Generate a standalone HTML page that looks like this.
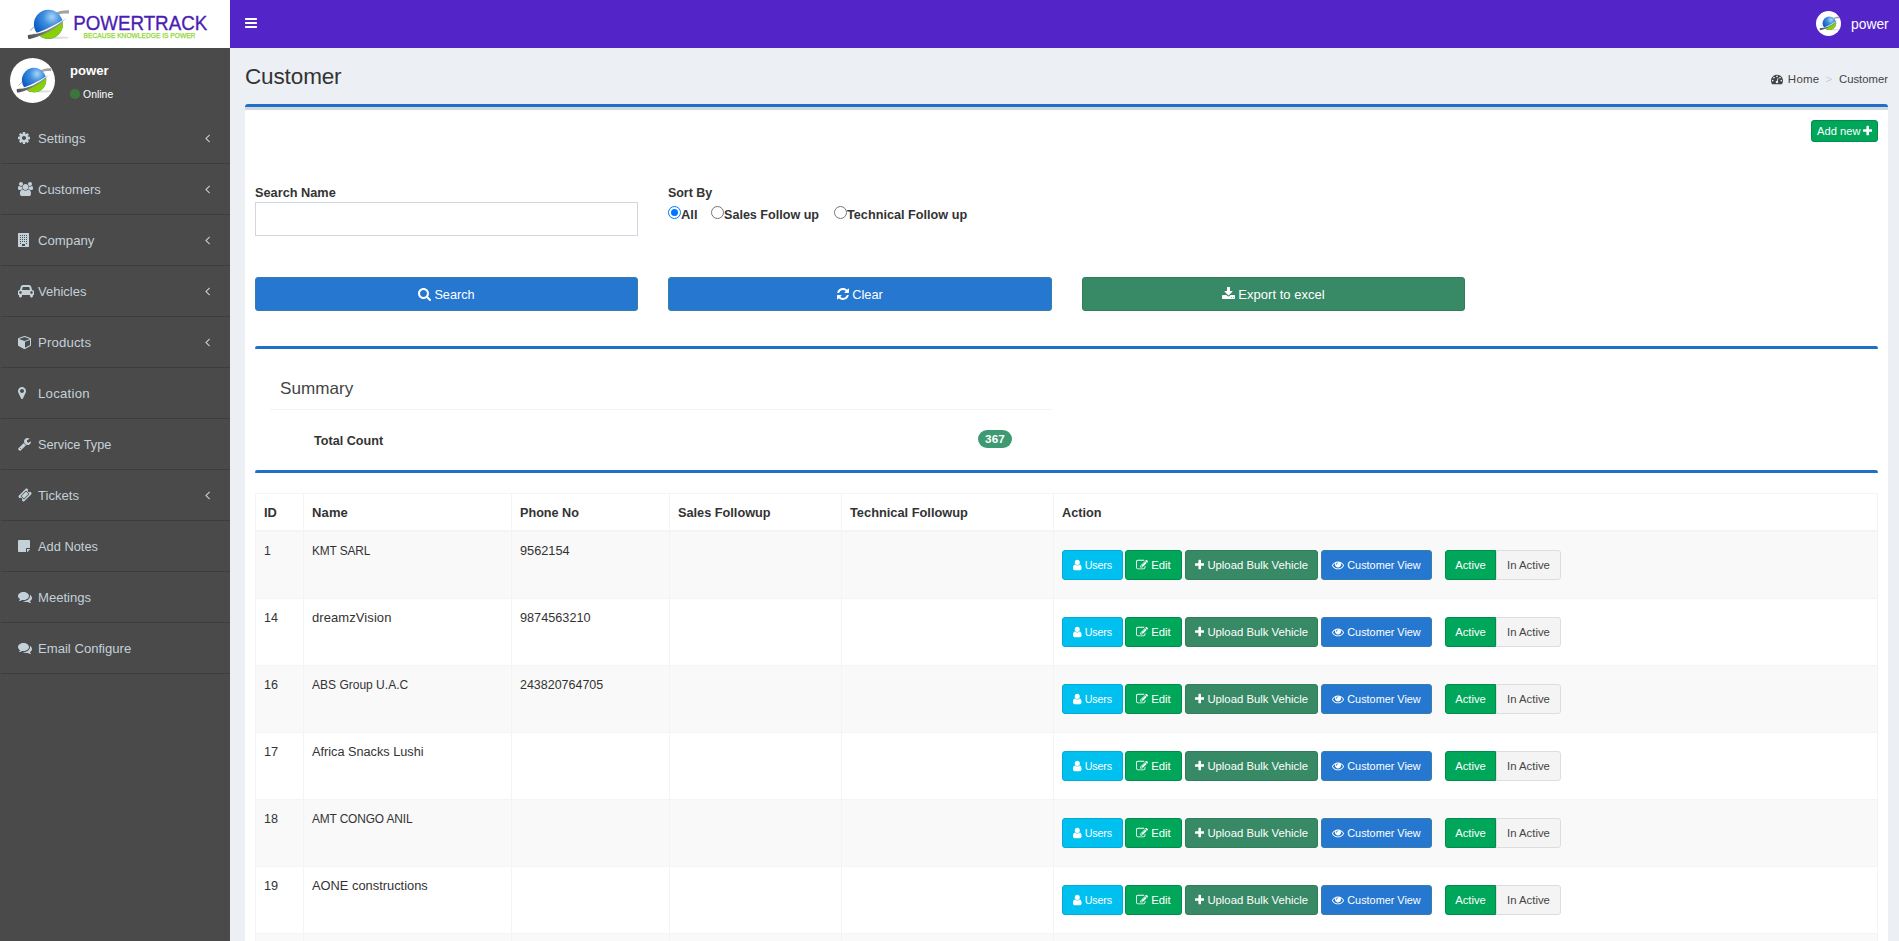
<!DOCTYPE html>
<html lang="en">
<head>
<meta charset="utf-8">
<title>Customer</title>
<style>
*{box-sizing:border-box}
html,body{margin:0;padding:0}
body{width:1899px;height:941px;overflow:hidden;background:#ecf0f5;font-family:"Liberation Sans",sans-serif;font-size:13px;line-height:20px;color:#333;position:relative}
.fa{display:inline-block;vertical-align:middle;flex:none}
span{white-space:nowrap}
/* header */
.logo{position:absolute;left:0;top:0;width:230px;height:48px;background:#fff}
.navbar{position:absolute;left:230px;top:0;width:1669px;height:48px;background:#5325c9;color:#fff}
.navbar .toggle{position:absolute;left:15px;top:16px;line-height:0}
.navbar .av{position:absolute;left:1586px;top:11px;width:25px;height:25px;border-radius:50%;background:#fff;overflow:hidden;line-height:0}
.navbar .un{position:absolute;left:1621px;top:14px;line-height:20px}
/* sidebar */
.sidebar{position:absolute;left:0;top:48px;width:230px;height:893px;background:#4a4a4a}
.upanel{position:relative;height:65px}
.upanel .img{position:absolute;left:10px;top:10px;width:45px;height:45px;border-radius:50%;background:#fff;overflow:hidden;line-height:0}
.upanel .nm{position:absolute;left:70px;top:13px;color:#fff;line-height:20px}
.upanel .st{position:absolute;left:70px;top:36px;color:#fff;line-height:20px;white-space:nowrap}
.upanel .st i{display:inline-block;width:9.6px;height:9.6px;border-radius:50%;background:#3c763d;margin-right:3.5px;vertical-align:-1px}
.menu{list-style:none;margin:0;padding:0}
.menu li{height:51px;position:relative;color:#c4d1d9;line-height:52px;padding-left:38px;white-space:nowrap}
.menu li:after{content:"";position:absolute;left:1px;right:0;bottom:0;height:1px;background:#3d3d3d}
.menu li .ic{position:absolute;left:18px;top:0;height:50px;display:flex;align-items:center}
.menu li .ar{position:absolute;left:205px;top:0px;height:50px;display:flex;align-items:center}
/* content */
h1{position:absolute;left:245px;top:63px;margin:0;line-height:26px;font-weight:normal;color:#333;font-size:23px}
.bc{position:absolute;right:11px;top:69px;line-height:20px;color:#444;white-space:nowrap;display:flex;align-items:center;font-size:11.3px}
.bc .sep{color:#ccc;margin:0 7px 0 6px}
.box{position:absolute;left:245px;top:104px;width:1643px;height:900px;background:#fff;border-top:3px solid #1f70c9;border-radius:3px 3px 0 0}
.box:before{content:"";position:absolute;left:0;top:0;width:100%;height:3px;background:#d2d6de}
.btn{position:absolute;display:flex;align-items:center;justify-content:center;color:#fff;border-radius:3px;white-space:nowrap;border:1px solid transparent}
.addnew{left:1811px;top:120px;width:67px;height:22px;background:#00a65a;border-color:#008d4c}
label{position:absolute;line-height:20px;color:#333;white-space:nowrap}
.inp{position:absolute;left:255px;top:202px;width:383px;height:34px;border:1px solid #d2d6de;background:#fff}
.radio{position:absolute;top:206px;width:13px;height:13px;border-radius:50%;border:1px solid #767676;background:#fff}
.radio.on{border-color:#0075ff;border-width:1.5px}
.radio.on:after{content:"";position:absolute;left:1.5px;top:1.5px;width:7px;height:7px;border-radius:50%;background:#0075ff}
.big{top:277px;width:383px;height:34px}
.b-primary{background:#2577d0;border-color:#367fa9}
.b-green{background:#378a65;border-color:#2f7d5a}
.hr{position:absolute;left:255px;width:1623px;height:3px;background:#1f70c9;border-radius:3px 3px 1px 1px}
.sumt{position:absolute;left:280px;top:377px;line-height:24px;color:#444}
.sumline{position:absolute;left:270px;top:409px;width:782px;height:1px;background:#f4f4f4}
.badge{position:absolute;left:978px;top:430px;width:34px;height:18px;border-radius:9px;background:#3e9a72;color:#fff;line-height:18px;text-align:center}
/* table */
table{position:absolute;left:255px;top:493px;width:1623px;border-collapse:separate;border-spacing:0;table-layout:fixed;border-top:1px solid #f4f4f4;border-left:1px solid #f4f4f4}
th,td{border-right:1px solid #f4f4f4;border-bottom:1px solid #f4f4f4;padding:9px 8px 0 8px;text-align:left;vertical-align:top;white-space:nowrap;overflow:hidden;font-weight:normal;line-height:20px}
th{height:38px;border-bottom:2px solid #f4f4f4}
td{height:67px}
tr.odd td{background:#f9f9f9}
td.act{position:relative;padding:0}
td.act .btn{top:18px;height:30px}
.u{left:8px;width:61px;background:#00c0ef;border-color:#00acd6}
.e{left:71px;width:57px;background:#00a65a;border-color:#008d4c}
.v{left:131px;width:133px;background:#378a65;border-color:#2f7d5a}
.c{left:267px;width:111px;background:#2577d0;border-color:#367fa9}
.a{left:391px;width:51px;background:#00a65a;border-color:#008d4c;border-radius:3px 0 0 3px}
.i{left:442px;width:65px;background:#f4f4f4;border-color:#ddd;color:#444;border-radius:0 3px 3px 0}

.big span{position:relative;top:1px}

</style>
</head>
<body>
<div class="logo">
<svg width="230" height="48" viewBox="0 0 230 48">
<defs>
<radialGradient id="gb" cx="0.62" cy="0.25" r="0.85"><stop offset="0" stop-color="#a8d4f5"/><stop offset="0.35" stop-color="#3f8fdf"/><stop offset="0.75" stop-color="#0f63c8"/><stop offset="1" stop-color="#0a4fb0"/></radialGradient>
<linearGradient id="gg" x1="0" y1="0" x2="1" y2="1"><stop offset="0" stop-color="#79c400"/><stop offset="1" stop-color="#93d70a"/></linearGradient>
<linearGradient id="gr" x1="0" y1="1" x2="1" y2="0"><stop offset="0" stop-color="#4d4d4d"/><stop offset="0.55" stop-color="#8a8a8a"/><stop offset="1" stop-color="#b5b5b5"/></linearGradient>
<clipPath id="cg"><circle cx="48.4" cy="24.2" r="14.5"/></clipPath>
</defs>
<ellipse cx="55" cy="37.700" rx="14" ry="1.300" fill="#000" opacity=".13"/>
<path d="M30 30.600 L34.500 26.400" stroke="#8c8c8c" stroke-width=".8" fill="none"/>
<path d="M56.300 12.600 C60 10.600 65 9.900 69 10.200 C69.300 11.500 69 12.800 68.400 13.800 C65 13.300 61 13.600 58.400 14.800Z" fill="#a3a3a3"/>
<circle cx="48.400" cy="24.200" r="14.500" fill="url(#gb)"/>
<path clip-path="url(#cg)" d="M28 38 Q54 32.500 66.300 18.200 L70 44 L28 44Z" fill="url(#gg)"/>
<path d="M27.900 35 Q34 34.500 44 30 Q56 24.600 66.500 18 Q57 27.500 46 33 Q36 38 28.700 39.200 Q27.200 37.500 27.900 35Z" fill="url(#gr)"/>
<path d="M31 34.300 Q38 33 46 29.300 Q57 24 66.500 18 Q57 25.500 47 30.600 Q38 34.500 31 34.300Z" fill="#fff"/>
<text x="73.200" y="30" font-family="Liberation Sans, sans-serif" font-size="21" fill="#4a1db3" stroke="#4a1db3" stroke-width=".35" textLength="134" lengthAdjust="spacingAndGlyphs">POWERTRACK</text>
<text x="83.600" y="38.300" font-family="Liberation Sans, sans-serif" font-size="8" fill="#8ed62c" stroke="#8ed62c" stroke-width=".25" textLength="111.800" lengthAdjust="spacingAndGlyphs">BECAUSE KNOWLEDGE IS POWER</text>
</svg>
</div>
<div class="navbar">
<div class="toggle"><svg class="fa" width="12.00" height="14" viewBox="0 -1536 1536 1792" style="" fill="currentColor"><path transform="scale(1,-1)" d="M1536 192C1536 227 1507 256 1472 256H64C29 256 0 227 0 192V64C0 29 29 0 64 0H1472C1507 0 1536 29 1536 64ZM1536 704C1536 739 1507 768 1472 768H64C29 768 0 739 0 704V576C0 541 29 512 64 512H1472C1507 512 1536 541 1536 576ZM1536 1216C1536 1251 1507 1280 1472 1280H64C29 1280 0 1251 0 1216V1088C0 1053 29 1024 64 1024H1472C1507 1024 1536 1053 1536 1088Z"/></svg></div>
<div class="av"><svg width="25" height="25" viewBox="19.8 -2 53.5 53.5"><ellipse cx="55" cy="37.700" rx="14" ry="1.300" fill="#000" opacity=".13"/>
<path d="M30 30.600 L34.500 26.400" stroke="#8c8c8c" stroke-width=".8" fill="none"/>
<path d="M56.300 12.600 C60 10.600 65 9.900 69 10.200 C69.300 11.500 69 12.800 68.400 13.800 C65 13.300 61 13.600 58.400 14.800Z" fill="#a3a3a3"/>
<circle cx="48.400" cy="24.200" r="14.500" fill="url(#gb)"/>
<path clip-path="url(#cg)" d="M28 38 Q54 32.500 66.300 18.200 L70 44 L28 44Z" fill="url(#gg)"/>
<path d="M27.900 35 Q34 34.500 44 30 Q56 24.600 66.500 18 Q57 27.500 46 33 Q36 38 28.700 39.200 Q27.200 37.500 27.900 35Z" fill="url(#gr)"/>
<path d="M31 34.300 Q38 33 46 29.300 Q57 24 66.500 18 Q57 25.500 47 30.600 Q38 34.500 31 34.300Z" fill="#fff"/></svg></div>
<div class="un"><span style="font-size:13.85px">power</span></div>
</div>
<div class="sidebar">
<div class="upanel">
<div class="img"><svg width="45" height="45" viewBox="19.8 -2 53.5 53.5"><ellipse cx="55" cy="37.700" rx="14" ry="1.300" fill="#000" opacity=".13"/>
<path d="M30 30.600 L34.500 26.400" stroke="#8c8c8c" stroke-width=".8" fill="none"/>
<path d="M56.300 12.600 C60 10.600 65 9.900 69 10.200 C69.300 11.500 69 12.800 68.400 13.800 C65 13.300 61 13.600 58.400 14.800Z" fill="#a3a3a3"/>
<circle cx="48.400" cy="24.200" r="14.500" fill="url(#gb)"/>
<path clip-path="url(#cg)" d="M28 38 Q54 32.500 66.300 18.200 L70 44 L28 44Z" fill="url(#gg)"/>
<path d="M27.900 35 Q34 34.500 44 30 Q56 24.600 66.500 18 Q57 27.500 46 33 Q36 38 28.700 39.200 Q27.200 37.500 27.900 35Z" fill="url(#gr)"/>
<path d="M31 34.300 Q38 33 46 29.300 Q57 24 66.500 18 Q57 25.500 47 30.600 Q38 34.500 31 34.300Z" fill="#fff"/></svg></div>
<div class="nm"><span style="font-size:13.11px;font-weight:bold">power</span></div>
<div class="st"><i></i><span style="font-size:10.41px">Online</span></div>
</div>
<ul class="menu">
<li><span class="ic"><svg class="fa" width="12.00" height="14" viewBox="0 -1536 1536 1792" style="" fill="currentColor"><path transform="scale(1,-1)" d="M1024 640C1024 499 909 384 768 384C627 384 512 499 512 640C512 781 627 896 768 896C909 896 1024 781 1024 640ZM1536 749C1536 766 1524 782 1507 785L1324 813C1314 846 1300 879 1283 911C1317 958 1354 1002 1388 1048C1393 1055 1396 1062 1396 1071C1396 1079 1394 1087 1389 1093C1347 1152 1277 1214 1224 1263C1217 1269 1208 1273 1199 1273C1190 1273 1181 1270 1175 1264L1033 1157C1004 1172 974 1184 943 1194L915 1378C913 1395 897 1408 879 1408H657C639 1408 625 1396 621 1380C605 1320 599 1255 592 1194C561 1184 530 1171 501 1156L363 1263C355 1269 346 1273 337 1273C303 1273 168 1127 144 1094C139 1087 135 1080 135 1071C135 1062 139 1054 145 1047C182 1002 218 957 252 909C236 879 223 849 213 817L27 789C12 786 0 768 0 753V531C0 514 12 498 29 495L212 468C222 434 236 401 253 369C219 322 182 278 148 232C143 225 140 218 140 209C140 201 142 193 147 186C189 128 259 66 312 18C319 11 328 7 337 7C346 7 355 10 362 16L503 123C532 108 562 96 593 86L621 -98C623 -115 639 -128 657 -128H879C897 -128 911 -116 915 -100C931 -40 937 25 944 86C975 96 1006 109 1035 124L1173 16C1181 11 1190 7 1199 7C1233 7 1368 154 1392 186C1398 193 1401 200 1401 209C1401 218 1397 227 1391 234C1354 279 1318 323 1284 372C1300 401 1312 431 1323 463L1508 491C1524 494 1536 512 1536 527Z"/></svg></span><span style="font-size:13.15px">Settings</span><span class="ar"><svg class="fa" width="5.00" height="14" viewBox="0 -1536 640 1792" style="" fill="currentColor"><path transform="scale(1,-1)" d="M627 992C627 1001 623 1009 617 1015L567 1065C561 1071 552 1075 544 1075C536 1075 527 1071 521 1065L55 599C49 593 45 584 45 576C45 568 49 559 55 553L521 87C527 81 536 77 544 77C552 77 561 81 567 87L617 137C623 143 627 152 627 160C627 168 623 177 617 183L224 576L617 969C623 975 627 984 627 992Z"/></svg></span></li>
<li><span class="ic"><svg class="fa" width="15.00" height="14" viewBox="0 -1536 1920 1792" style="" fill="currentColor"><path transform="scale(1,-1)" d="M593 640C541 715 512 805 512 896C512 918 514 940 517 962C474 947 430 939 384 939C249 939 145 1024 124 1024C-3 1024 0 752 0 671C0 560 94 512 194 512H328C395 592 489 637 593 640ZM1664 3C1664 229 1611 576 1318 576C1284 576 1160 437 960 437C760 437 636 576 602 576C309 576 256 229 256 3C256 -159 363 -256 523 -256H1397C1557 -256 1664 -159 1664 3ZM640 1280C640 1421 525 1536 384 1536C243 1536 128 1421 128 1280C128 1139 243 1024 384 1024C525 1024 640 1139 640 1280ZM1344 896C1344 1108 1172 1280 960 1280C748 1280 576 1108 576 896C576 684 748 512 960 512C1172 512 1344 684 1344 896ZM1920 671C1920 752 1923 1024 1796 1024C1775 1024 1671 939 1536 939C1490 939 1446 947 1403 962C1406 940 1408 918 1408 896C1408 805 1379 715 1327 640C1431 637 1525 592 1592 512H1726C1826 512 1920 560 1920 671ZM1792 1280C1792 1421 1677 1536 1536 1536C1395 1536 1280 1421 1280 1280C1280 1139 1395 1024 1536 1024C1677 1024 1792 1139 1792 1280Z"/></svg></span><span style="font-size:13.00px">Customers</span><span class="ar"><svg class="fa" width="5.00" height="14" viewBox="0 -1536 640 1792" style="" fill="currentColor"><path transform="scale(1,-1)" d="M627 992C627 1001 623 1009 617 1015L567 1065C561 1071 552 1075 544 1075C536 1075 527 1071 521 1065L55 599C49 593 45 584 45 576C45 568 49 559 55 553L521 87C527 81 536 77 544 77C552 77 561 81 567 87L617 137C623 143 627 152 627 160C627 168 623 177 617 183L224 576L617 969C623 975 627 984 627 992Z"/></svg></span></li>
<li><span class="ic"><svg class="fa" width="12.00" height="14" viewBox="0 -1536 1536 1792" style="" fill="currentColor"><path transform="scale(1,-1)" d="M1344 1536H64C29 1536 0 1507 0 1472V-192C0 -227 29 -256 64 -256H1344C1379 -256 1408 -227 1408 -192V1472C1408 1507 1379 1536 1344 1536ZM512 1248C512 1266 526 1280 544 1280H608C626 1280 640 1266 640 1248V1184C640 1166 626 1152 608 1152H544C526 1152 512 1166 512 1184ZM512 992C512 1010 526 1024 544 1024H608C626 1024 640 1010 640 992V928C640 910 626 896 608 896H544C526 896 512 910 512 928ZM512 736C512 754 526 768 544 768H608C626 768 640 754 640 736V672C640 654 626 640 608 640H544C526 640 512 654 512 672ZM512 480C512 498 526 512 544 512H608C626 512 640 498 640 480V416C640 398 626 384 608 384H544C526 384 512 398 512 416ZM384 160C384 142 370 128 352 128H288C270 128 256 142 256 160V224C256 242 270 256 288 256H352C370 256 384 242 384 224ZM384 416C384 398 370 384 352 384H288C270 384 256 398 256 416V480C256 498 270 512 288 512H352C370 512 384 498 384 480ZM384 672C384 654 370 640 352 640H288C270 640 256 654 256 672V736C256 754 270 768 288 768H352C370 768 384 754 384 736ZM384 928C384 910 370 896 352 896H288C270 896 256 910 256 928V992C256 1010 270 1024 288 1024H352C370 1024 384 1010 384 992ZM384 1184C384 1166 370 1152 352 1152H288C270 1152 256 1166 256 1184V1248C256 1266 270 1280 288 1280H352C370 1280 384 1266 384 1248ZM896 -96C896 -114 882 -128 864 -128H544C526 -128 512 -114 512 -96V96C512 114 526 128 544 128H864C882 128 896 114 896 96ZM896 416C896 398 882 384 864 384H800C782 384 768 398 768 416V480C768 498 782 512 800 512H864C882 512 896 498 896 480ZM896 672C896 654 882 640 864 640H800C782 640 768 654 768 672V736C768 754 782 768 800 768H864C882 768 896 754 896 736ZM896 928C896 910 882 896 864 896H800C782 896 768 910 768 928V992C768 1010 782 1024 800 1024H864C882 1024 896 1010 896 992ZM896 1184C896 1166 882 1152 864 1152H800C782 1152 768 1166 768 1184V1248C768 1266 782 1280 800 1280H864C882 1280 896 1266 896 1248ZM1152 160C1152 142 1138 128 1120 128H1056C1038 128 1024 142 1024 160V224C1024 242 1038 256 1056 256H1120C1138 256 1152 242 1152 224ZM1152 416C1152 398 1138 384 1120 384H1056C1038 384 1024 398 1024 416V480C1024 498 1038 512 1056 512H1120C1138 512 1152 498 1152 480ZM1152 672C1152 654 1138 640 1120 640H1056C1038 640 1024 654 1024 672V736C1024 754 1038 768 1056 768H1120C1138 768 1152 754 1152 736ZM1152 928C1152 910 1138 896 1120 896H1056C1038 896 1024 910 1024 928V992C1024 1010 1038 1024 1056 1024H1120C1138 1024 1152 1010 1152 992ZM1152 1184C1152 1166 1138 1152 1120 1152H1056C1038 1152 1024 1166 1024 1184V1248C1024 1266 1038 1280 1056 1280H1120C1138 1280 1152 1266 1152 1248Z"/></svg></span><span style="font-size:13.19px">Company</span><span class="ar"><svg class="fa" width="5.00" height="14" viewBox="0 -1536 640 1792" style="" fill="currentColor"><path transform="scale(1,-1)" d="M627 992C627 1001 623 1009 617 1015L567 1065C561 1071 552 1075 544 1075C536 1075 527 1071 521 1065L55 599C49 593 45 584 45 576C45 568 49 559 55 553L521 87C527 81 536 77 544 77C552 77 561 81 567 87L617 137C623 143 627 152 627 160C627 168 623 177 617 183L224 576L617 969C623 975 627 984 627 992Z"/></svg></span></li>
<li><span class="ic"><svg class="fa" width="16.00" height="14" viewBox="0 -1536 2048 1792" style="" fill="currentColor"><path transform="scale(1,-1)" d="M480 448C480 360 408 288 320 288C232 288 160 360 160 448C160 536 232 608 320 608C408 608 480 536 480 448ZM516 768 605 1125C608 1136 628 1152 640 1152H1408C1420 1152 1440 1136 1443 1125L1532 768ZM1888 448C1888 360 1816 288 1728 288C1640 288 1568 360 1568 448C1568 536 1640 608 1728 608C1816 608 1888 536 1888 448ZM2048 544C2048 668 1948 768 1824 768H1796L1691 1187C1660 1313 1538 1408 1408 1408H640C510 1408 388 1313 357 1187L252 768H224C100 768 0 668 0 544V160C0 142 14 128 32 128H128V0C128 -106 214 -192 320 -192C426 -192 512 -106 512 0V128H1536V0C1536 -106 1622 -192 1728 -192C1834 -192 1920 -106 1920 0V128H2016C2034 128 2048 142 2048 160Z"/></svg></span><span style="font-size:13.02px">Vehicles</span><span class="ar"><svg class="fa" width="5.00" height="14" viewBox="0 -1536 640 1792" style="" fill="currentColor"><path transform="scale(1,-1)" d="M627 992C627 1001 623 1009 617 1015L567 1065C561 1071 552 1075 544 1075C536 1075 527 1071 521 1065L55 599C49 593 45 584 45 576C45 568 49 559 55 553L521 87C527 81 536 77 544 77C552 77 561 81 567 87L617 137C623 143 627 152 627 160C627 168 623 177 617 183L224 576L617 969C623 975 627 984 627 992Z"/></svg></span></li>
<li><span class="ic"><svg class="fa" width="14.00" height="14" viewBox="0 -1536 1792 1792" style="" fill="currentColor"><path transform="scale(1,-1)" d="M896 -93V659L1536 892V256ZM832 772 134 1026 832 1280 1530 1026ZM1664 1024C1664 1078 1630 1126 1580 1144L876 1400C862 1405 847 1408 832 1408C817 1408 802 1405 788 1400L84 1144C34 1126 0 1078 0 1024V256C0 209 26 166 67 144L771 -240C790 -251 811 -256 832 -256C853 -256 874 -251 893 -240L1597 144C1638 166 1664 209 1664 256Z"/></svg></span><span style="font-size:13.20px;letter-spacing:0.14px">Products</span><span class="ar"><svg class="fa" width="5.00" height="14" viewBox="0 -1536 640 1792" style="" fill="currentColor"><path transform="scale(1,-1)" d="M627 992C627 1001 623 1009 617 1015L567 1065C561 1071 552 1075 544 1075C536 1075 527 1071 521 1065L55 599C49 593 45 584 45 576C45 568 49 559 55 553L521 87C527 81 536 77 544 77C552 77 561 81 567 87L617 137C623 143 627 152 627 160C627 168 623 177 617 183L224 576L617 969C623 975 627 984 627 992Z"/></svg></span></li>
<li><span class="ic"><svg class="fa" width="8.00" height="14" viewBox="0 -1536 1024 1792" style="" fill="currentColor"><path transform="scale(1,-1)" d="M768 896C768 755 653 640 512 640C371 640 256 755 256 896C256 1037 371 1152 512 1152C653 1152 768 1037 768 896ZM1024 896C1024 1179 795 1408 512 1408C229 1408 0 1179 0 896C0 835 7 772 33 717L398 -57C418 -101 464 -128 512 -128C560 -128 606 -101 627 -57L991 717C1017 772 1024 835 1024 896Z"/></svg></span><span style="font-size:13.20px;letter-spacing:0.24px">Location</span></li>
<li><span class="ic"><svg class="fa" width="13.00" height="14" viewBox="0 -1536 1664 1792" style="" fill="currentColor"><path transform="scale(1,-1)" d="M384 64C384 29 355 0 320 0C285 0 256 29 256 64C256 99 285 128 320 128C355 128 384 99 384 64ZM1028 484C897 536 792 641 740 772L59 91C35 67 21 34 21 0C21 -34 35 -67 59 -90L165 -198C189 -221 222 -235 256 -235C290 -235 323 -221 346 -198L1028 484ZM1662 919C1662 939 1650 954 1630 954C1610 954 1378 808 1345 789L1152 896V1120L1445 1289C1454 1295 1461 1306 1461 1317C1461 1329 1455 1338 1445 1345C1384 1386 1289 1408 1216 1408C969 1408 768 1207 768 960C768 713 969 512 1216 512C1405 512 1576 635 1639 813C1650 845 1662 886 1662 919Z"/></svg></span><span style="font-size:12.73px">Service Type</span></li>
<li><span class="ic"><svg class="fa" width="14.00" height="14" viewBox="0 -1536 1792 1792" style="" fill="currentColor"><path transform="scale(1,-1)" d="M1024 1084 452 512 768 196 1340 768ZM813 105C801 93 785 87 768 87C751 87 735 93 723 105L361 467C336 492 336 532 361 557L979 1175C1003 1199 1045 1199 1069 1175L1431 813C1456 788 1456 748 1431 723ZM1702 742C1751 791 1751 873 1702 923L1576 1048C1501 973 1379 973 1304 1048C1229 1123 1229 1245 1304 1320L1179 1445C1129 1495 1047 1495 998 1445L91 539C41 489 41 407 91 358L216 232C291 307 413 307 488 232C563 157 563 35 488 -40L614 -166C663 -215 745 -215 795 -166L1702 742Z"/></svg></span><span style="font-size:13.12px">Tickets</span><span class="ar"><svg class="fa" width="5.00" height="14" viewBox="0 -1536 640 1792" style="" fill="currentColor"><path transform="scale(1,-1)" d="M627 992C627 1001 623 1009 617 1015L567 1065C561 1071 552 1075 544 1075C536 1075 527 1071 521 1065L55 599C49 593 45 584 45 576C45 568 49 559 55 553L521 87C527 81 536 77 544 77C552 77 561 81 567 87L617 137C623 143 627 152 627 160C627 168 623 177 617 183L224 576L617 969C623 975 627 984 627 992Z"/></svg></span></li>
<li><span class="ic"><svg class="fa" width="12.00" height="14" viewBox="0 -1536 1536 1792" style="" fill="currentColor"><path transform="scale(1,-1)" d="M1024 288C1024 341 1067 384 1120 384H1536V1312C1536 1365 1493 1408 1440 1408H96C43 1408 0 1365 0 1312V-32C0 -85 43 -128 96 -128H1024ZM1152 256V-125C1200 -116 1254 -90 1284 -60L1468 124C1498 154 1524 208 1533 256Z"/></svg></span><span style="font-size:12.85px">Add Notes</span></li>
<li><span class="ic"><svg class="fa" width="14.00" height="14" viewBox="0 -1536 1792 1792" style="" fill="currentColor"><path transform="scale(1,-1)" d="M1408 768C1408 1051 1093 1280 704 1280C315 1280 0 1051 0 768C0 606 104 461 266 367C232 284 188 245 149 201C138 188 125 176 129 157C129 157 129 157 129 157C132 140 146 128 161 128C162 128 163 128 164 128C194 132 223 137 250 144C351 170 445 213 528 272C584 262 643 256 704 256C1093 256 1408 485 1408 768ZM1792 512C1792 679 1682 827 1513 920C1528 871 1536 820 1536 768C1536 589 1444 424 1277 302C1122 190 919 128 704 128C675 128 645 130 616 132C741 50 907 0 1088 0C1149 0 1208 6 1264 16C1347 -43 1441 -86 1542 -112C1569 -119 1598 -124 1628 -128C1644 -130 1659 -117 1663 -99C1663 -99 1663 -99 1663 -99C1667 -80 1654 -68 1643 -55C1604 -11 1560 28 1526 111C1688 205 1792 349 1792 512Z"/></svg></span><span style="font-size:13.07px">Meetings</span></li>
<li><span class="ic"><svg class="fa" width="14.00" height="14" viewBox="0 -1536 1792 1792" style="" fill="currentColor"><path transform="scale(1,-1)" d="M1408 768C1408 1051 1093 1280 704 1280C315 1280 0 1051 0 768C0 606 104 461 266 367C232 284 188 245 149 201C138 188 125 176 129 157C129 157 129 157 129 157C132 140 146 128 161 128C162 128 163 128 164 128C194 132 223 137 250 144C351 170 445 213 528 272C584 262 643 256 704 256C1093 256 1408 485 1408 768ZM1792 512C1792 679 1682 827 1513 920C1528 871 1536 820 1536 768C1536 589 1444 424 1277 302C1122 190 919 128 704 128C675 128 645 130 616 132C741 50 907 0 1088 0C1149 0 1208 6 1264 16C1347 -43 1441 -86 1542 -112C1569 -119 1598 -124 1628 -128C1644 -130 1659 -117 1663 -99C1663 -99 1663 -99 1663 -99C1667 -80 1654 -68 1643 -55C1604 -11 1560 28 1526 111C1688 205 1792 349 1792 512Z"/></svg></span><span style="font-size:13.12px">Email Configure</span></li>
</ul>
</div>
<h1><span style="font-size:22.50px;letter-spacing:-0.13px">Customer</span></h1>
<div class="bc"><svg class="fa" width="12.00" height="12" viewBox="0 -1536 1792 1792" style="margin-right:5px" fill="currentColor"><path transform="scale(1,-1)" d="M384 384C384 313 327 256 256 256C185 256 128 313 128 384C128 455 185 512 256 512C327 512 384 455 384 384ZM576 832C576 761 519 704 448 704C377 704 320 761 320 832C320 903 377 960 448 960C519 960 576 903 576 832ZM1004 351C1069 306 1103 224 1082 143C1055 41 950 -21 847 6C745 33 683 138 710 241C732 322 801 377 880 383L981 765C990 799 1025 820 1059 811C1093 802 1113 767 1105 733ZM1664 384C1664 313 1607 256 1536 256C1465 256 1408 313 1408 384C1408 455 1465 512 1536 512C1607 512 1664 455 1664 384ZM1024 1024C1024 953 967 896 896 896C825 896 768 953 768 1024C768 1095 825 1152 896 1152C967 1152 1024 1095 1024 1024ZM1472 832C1472 761 1415 704 1344 704C1273 704 1216 761 1216 832C1216 903 1273 960 1344 960C1415 960 1472 903 1472 832ZM1792 384C1792 878 1390 1280 896 1280C402 1280 0 878 0 384C0 212 49 45 141 -99C153 -117 173 -128 195 -128H1597C1619 -128 1639 -117 1651 -99C1743 46 1792 212 1792 384Z"/></svg><span style="font-size:11.50px;letter-spacing:0.22px">Home</span><span class="sep">&gt;</span><span style="font-size:11.31px">Customer</span></div>
<div class="box"></div>
<a class="btn addnew"><span style="font-size:11.16px">Add new</span><svg class="fa" width="9.43" height="12" viewBox="0 -1536 1408 1792" style="margin-left:2px" fill="currentColor"><path transform="scale(1,-1)" d="M1408 800C1408 853 1365 896 1312 896H896V1312C896 1365 853 1408 800 1408H608C555 1408 512 1365 512 1312V896H96C43 896 0 853 0 800V608C0 555 43 512 96 512H512V96C512 43 555 0 608 0H800C853 0 896 43 896 96V512H1312C1365 512 1408 555 1408 608Z"/></svg></a>
<label style="left:255px;top:183px"><span style="font-size:12.76px;font-weight:bold">Search Name</span></label>
<div class="inp"></div>
<label style="left:668px;top:183px"><span style="font-size:12.50px;letter-spacing:-0.06px;font-weight:bold">Sort By</span></label>
<span class="radio on" style="left:668px"></span><label style="left:681px;top:205px"><span style="font-size:12.94px;font-weight:bold">All</span></label>
<span class="radio" style="left:711px"></span><label style="left:724px;top:205px"><span style="font-size:12.59px;font-weight:bold">Sales Follow up</span></label>
<span class="radio" style="left:834px"></span><label style="left:847px;top:205px"><span style="font-size:12.68px;font-weight:bold">Technical Follow up</span></label>
<a class="btn big b-primary" style="left:255px"><svg class="fa" width="13.00" height="14" viewBox="0 -1536 1664 1792" style="margin-right:3px" fill="currentColor"><path transform="scale(1,-1)" d="M1152 704C1152 457 951 256 704 256C457 256 256 457 256 704C256 951 457 1152 704 1152C951 1152 1152 951 1152 704ZM1664 -128C1664 -94 1650 -61 1627 -38L1284 305C1365 422 1408 562 1408 704C1408 1093 1093 1408 704 1408C315 1408 0 1093 0 704C0 315 315 0 704 0C846 0 986 43 1103 124L1446 -218C1469 -242 1502 -256 1536 -256C1606 -256 1664 -198 1664 -128Z"/></svg><span style="font-size:12.69px">Search</span></a>
<a class="btn big b-primary" style="left:668px;width:384px"><svg class="fa" width="12.00" height="14" viewBox="0 -1536 1536 1792" style="margin-right:3px" fill="currentColor"><path transform="scale(1,-1)" d="M1511 480C1511 497 1497 512 1479 512H1287C1272 512 1262 503 1257 489C1240 449 1228 411 1204 372C1111 220 946 128 768 128C639 128 514 178 420 266L557 403C569 415 576 431 576 448C576 483 547 512 512 512H64C29 512 0 483 0 448V0C0 -35 29 -64 64 -64C81 -64 97 -57 109 -45L238 84C380 -51 569 -128 764 -128C1133 -128 1425 119 1510 473C1511 475 1511 478 1511 480ZM1536 1280C1536 1315 1507 1344 1472 1344C1455 1344 1439 1337 1427 1325L1297 1196C1155 1330 964 1408 768 1408C399 1408 104 1162 18 807C18 805 18 802 18 800C18 783 32 768 50 768H249C264 768 274 777 279 791C296 831 308 869 332 908C425 1060 590 1152 768 1152C897 1152 1022 1103 1117 1015L979 877C967 865 960 849 960 832C960 797 989 768 1024 768H1472C1507 768 1536 797 1536 832Z"/></svg><span style="font-size:12.81px">Clear</span></a>
<a class="btn big b-green" style="left:1082px"><svg class="fa" width="13.00" height="14" viewBox="0 -1536 1664 1792" style="margin-right:3px" fill="currentColor"><path transform="scale(1,-1)" d="M1280 192C1280 157 1251 128 1216 128C1181 128 1152 157 1152 192C1152 227 1181 256 1216 256C1251 256 1280 227 1280 192ZM1536 192C1536 157 1507 128 1472 128C1437 128 1408 157 1408 192C1408 227 1437 256 1472 256C1507 256 1536 227 1536 192ZM1664 416C1664 469 1621 512 1568 512H1104L968 376C931 340 883 320 832 320C781 320 733 340 696 376L561 512H96C43 512 0 469 0 416V96C0 43 43 0 96 0H1568C1621 0 1664 43 1664 96ZM1339 985C1329 1008 1306 1024 1280 1024H1024V1472C1024 1507 995 1536 960 1536H704C669 1536 640 1507 640 1472V1024H384C358 1024 335 1008 325 985C315 961 320 933 339 915L787 467C799 454 816 448 832 448C848 448 865 454 877 467L1325 915C1344 933 1349 961 1339 985Z"/></svg><span style="font-size:13.00px;letter-spacing:0.03px">Export to excel</span></a>
<div class="hr" style="top:346px"></div>
<div class="sumt"><span style="font-size:17.13px">Summary</span></div>
<div class="sumline"></div>
<label style="left:314px;top:431px"><span style="font-size:12.62px;font-weight:bold">Total Count</span></label>
<div class="badge"><span style="font-size:11.70px;letter-spacing:0.12px;font-weight:bold">367</span></div>
<div class="hr" style="top:470px"></div>
<table>
<colgroup><col style="width:48px"><col style="width:208px"><col style="width:158px"><col style="width:172px"><col style="width:212px"><col style="width:824px"></colgroup>
<tr><th><span style="font-size:12.89px;font-weight:bold">ID</span></th><th><span style="font-size:13.00px;letter-spacing:0.14px;font-weight:bold">Name</span></th><th><span style="font-size:12.63px;font-weight:bold">Phone No</span></th><th><span style="font-size:12.72px;font-weight:bold">Sales Followup</span></th><th><span style="font-size:12.82px;font-weight:bold">Technical Followup</span></th><th><span style="font-size:12.71px;font-weight:bold">Action</span></th></tr>
<tr class="odd"><td><span style="font-size:12.30px;letter-spacing:-0.11px">1</span></td><td><span style="font-size:11.90px;letter-spacing:-0.12px">KMT SARL</span></td><td><span style="font-size:12.75px">9562154</span></td><td></td><td></td><td class="act"><a class="btn u"><svg class="fa" width="8.57" height="12" viewBox="0 -1536 1280 1792" style="margin-right:3px" fill="currentColor"><path transform="scale(1,-1)" d="M1280 137C1280 400 1215 704 953 704C872 625 762 576 640 576C518 576 408 625 327 704C65 704 0 400 0 137C0 -9 96 -128 213 -128H1067C1184 -128 1280 -9 1280 137ZM1024 1024C1024 1236 852 1408 640 1408C428 1408 256 1236 256 1024C256 812 428 640 640 640C852 640 1024 812 1024 1024Z"/></svg><span style="font-size:10.75px;letter-spacing:-0.17px">Users</span></a><a class="btn e"><svg class="fa" width="12.00" height="12" viewBox="0 -1536 1792 1792" style="margin-right:3px" fill="currentColor"><path transform="scale(1,-1)" d="M888 352H832V448H736V504L852 620L1004 468ZM1328 1072C1337 1063 1336 1048 1327 1039L977 689C968 680 953 679 944 688C935 697 936 712 945 721L1295 1071C1304 1080 1319 1081 1328 1072ZM1408 478C1408 491 1400 502 1388 507C1376 512 1363 510 1353 500L1289 436C1283 430 1280 422 1280 414V288C1280 200 1208 128 1120 128H288C200 128 128 200 128 288V1120C128 1208 200 1280 288 1280H1120C1135 1280 1150 1278 1165 1274C1176 1270 1188 1273 1197 1282L1246 1331C1254 1339 1257 1349 1255 1360C1253 1370 1246 1379 1237 1383C1200 1400 1160 1408 1120 1408H288C129 1408 0 1279 0 1120V288C0 129 129 0 288 0H1120C1279 0 1408 129 1408 288ZM1312 1216 640 544V256H928L1600 928ZM1756 1084C1793 1121 1793 1183 1756 1220L1604 1372C1567 1409 1505 1409 1468 1372L1376 1280L1664 992L1756 1084Z"/></svg><span style="font-size:11.37px">Edit</span></a><a class="btn v"><svg class="fa" width="9.43" height="12" viewBox="0 -1536 1408 1792" style="margin-right:3px" fill="currentColor"><path transform="scale(1,-1)" d="M1408 800C1408 853 1365 896 1312 896H896V1312C896 1365 853 1408 800 1408H608C555 1408 512 1365 512 1312V896H96C43 896 0 853 0 800V608C0 555 43 512 96 512H512V96C512 43 555 0 608 0H800C853 0 896 43 896 96V512H1312C1365 512 1408 555 1408 608Z"/></svg><span style="font-size:11.32px">Upload Bulk Vehicle</span></a><a class="btn c"><svg class="fa" width="12.00" height="12" viewBox="0 -1536 1792 1792" style="margin-right:3px" fill="currentColor"><path transform="scale(1,-1)" d="M1664 576C1493 312 1217 128 896 128C575 128 299 312 128 576C223 723 353 849 509 929C469 861 448 783 448 704C448 457 649 256 896 256C1143 256 1344 457 1344 704C1344 783 1323 861 1283 929C1439 849 1569 723 1664 576ZM944 960C944 934 922 912 896 912C782 912 688 818 688 704C688 678 666 656 640 656C614 656 592 678 592 704C592 871 729 1008 896 1008C922 1008 944 986 944 960ZM1792 576C1792 601 1784 624 1772 645C1588 947 1251 1152 896 1152C541 1152 204 947 20 645C8 624 0 601 0 576C0 551 8 528 20 507C204 205 541 0 896 0C1251 0 1588 204 1772 507C1784 528 1792 551 1792 576Z"/></svg><span style="font-size:10.86px">Customer View</span></a><a class="btn a"><span style="font-size:11.24px">Active</span></a><a class="btn i"><span style="font-size:11.32px">In Active</span></a></td></tr>
<tr class="even"><td><span style="font-size:12.50px">14</span></td><td><span style="font-size:13.00px;letter-spacing:0.08px">dreamzVision</span></td><td><span style="font-size:12.69px">9874563210</span></td><td></td><td></td><td class="act"><a class="btn u"><svg class="fa" width="8.57" height="12" viewBox="0 -1536 1280 1792" style="margin-right:3px" fill="currentColor"><path transform="scale(1,-1)" d="M1280 137C1280 400 1215 704 953 704C872 625 762 576 640 576C518 576 408 625 327 704C65 704 0 400 0 137C0 -9 96 -128 213 -128H1067C1184 -128 1280 -9 1280 137ZM1024 1024C1024 1236 852 1408 640 1408C428 1408 256 1236 256 1024C256 812 428 640 640 640C852 640 1024 812 1024 1024Z"/></svg><span style="font-size:10.75px;letter-spacing:-0.17px">Users</span></a><a class="btn e"><svg class="fa" width="12.00" height="12" viewBox="0 -1536 1792 1792" style="margin-right:3px" fill="currentColor"><path transform="scale(1,-1)" d="M888 352H832V448H736V504L852 620L1004 468ZM1328 1072C1337 1063 1336 1048 1327 1039L977 689C968 680 953 679 944 688C935 697 936 712 945 721L1295 1071C1304 1080 1319 1081 1328 1072ZM1408 478C1408 491 1400 502 1388 507C1376 512 1363 510 1353 500L1289 436C1283 430 1280 422 1280 414V288C1280 200 1208 128 1120 128H288C200 128 128 200 128 288V1120C128 1208 200 1280 288 1280H1120C1135 1280 1150 1278 1165 1274C1176 1270 1188 1273 1197 1282L1246 1331C1254 1339 1257 1349 1255 1360C1253 1370 1246 1379 1237 1383C1200 1400 1160 1408 1120 1408H288C129 1408 0 1279 0 1120V288C0 129 129 0 288 0H1120C1279 0 1408 129 1408 288ZM1312 1216 640 544V256H928L1600 928ZM1756 1084C1793 1121 1793 1183 1756 1220L1604 1372C1567 1409 1505 1409 1468 1372L1376 1280L1664 992L1756 1084Z"/></svg><span style="font-size:11.37px">Edit</span></a><a class="btn v"><svg class="fa" width="9.43" height="12" viewBox="0 -1536 1408 1792" style="margin-right:3px" fill="currentColor"><path transform="scale(1,-1)" d="M1408 800C1408 853 1365 896 1312 896H896V1312C896 1365 853 1408 800 1408H608C555 1408 512 1365 512 1312V896H96C43 896 0 853 0 800V608C0 555 43 512 96 512H512V96C512 43 555 0 608 0H800C853 0 896 43 896 96V512H1312C1365 512 1408 555 1408 608Z"/></svg><span style="font-size:11.32px">Upload Bulk Vehicle</span></a><a class="btn c"><svg class="fa" width="12.00" height="12" viewBox="0 -1536 1792 1792" style="margin-right:3px" fill="currentColor"><path transform="scale(1,-1)" d="M1664 576C1493 312 1217 128 896 128C575 128 299 312 128 576C223 723 353 849 509 929C469 861 448 783 448 704C448 457 649 256 896 256C1143 256 1344 457 1344 704C1344 783 1323 861 1283 929C1439 849 1569 723 1664 576ZM944 960C944 934 922 912 896 912C782 912 688 818 688 704C688 678 666 656 640 656C614 656 592 678 592 704C592 871 729 1008 896 1008C922 1008 944 986 944 960ZM1792 576C1792 601 1784 624 1772 645C1588 947 1251 1152 896 1152C541 1152 204 947 20 645C8 624 0 601 0 576C0 551 8 528 20 507C204 205 541 0 896 0C1251 0 1588 204 1772 507C1784 528 1792 551 1792 576Z"/></svg><span style="font-size:10.86px">Customer View</span></a><a class="btn a"><span style="font-size:11.24px">Active</span></a><a class="btn i"><span style="font-size:11.32px">In Active</span></a></td></tr>
<tr class="odd"><td><span style="font-size:12.62px">16</span></td><td><span style="font-size:12.03px">ABS Group U.A.C</span></td><td><span style="font-size:12.48px">243820764705</span></td><td></td><td></td><td class="act"><a class="btn u"><svg class="fa" width="8.57" height="12" viewBox="0 -1536 1280 1792" style="margin-right:3px" fill="currentColor"><path transform="scale(1,-1)" d="M1280 137C1280 400 1215 704 953 704C872 625 762 576 640 576C518 576 408 625 327 704C65 704 0 400 0 137C0 -9 96 -128 213 -128H1067C1184 -128 1280 -9 1280 137ZM1024 1024C1024 1236 852 1408 640 1408C428 1408 256 1236 256 1024C256 812 428 640 640 640C852 640 1024 812 1024 1024Z"/></svg><span style="font-size:10.75px;letter-spacing:-0.17px">Users</span></a><a class="btn e"><svg class="fa" width="12.00" height="12" viewBox="0 -1536 1792 1792" style="margin-right:3px" fill="currentColor"><path transform="scale(1,-1)" d="M888 352H832V448H736V504L852 620L1004 468ZM1328 1072C1337 1063 1336 1048 1327 1039L977 689C968 680 953 679 944 688C935 697 936 712 945 721L1295 1071C1304 1080 1319 1081 1328 1072ZM1408 478C1408 491 1400 502 1388 507C1376 512 1363 510 1353 500L1289 436C1283 430 1280 422 1280 414V288C1280 200 1208 128 1120 128H288C200 128 128 200 128 288V1120C128 1208 200 1280 288 1280H1120C1135 1280 1150 1278 1165 1274C1176 1270 1188 1273 1197 1282L1246 1331C1254 1339 1257 1349 1255 1360C1253 1370 1246 1379 1237 1383C1200 1400 1160 1408 1120 1408H288C129 1408 0 1279 0 1120V288C0 129 129 0 288 0H1120C1279 0 1408 129 1408 288ZM1312 1216 640 544V256H928L1600 928ZM1756 1084C1793 1121 1793 1183 1756 1220L1604 1372C1567 1409 1505 1409 1468 1372L1376 1280L1664 992L1756 1084Z"/></svg><span style="font-size:11.37px">Edit</span></a><a class="btn v"><svg class="fa" width="9.43" height="12" viewBox="0 -1536 1408 1792" style="margin-right:3px" fill="currentColor"><path transform="scale(1,-1)" d="M1408 800C1408 853 1365 896 1312 896H896V1312C896 1365 853 1408 800 1408H608C555 1408 512 1365 512 1312V896H96C43 896 0 853 0 800V608C0 555 43 512 96 512H512V96C512 43 555 0 608 0H800C853 0 896 43 896 96V512H1312C1365 512 1408 555 1408 608Z"/></svg><span style="font-size:11.32px">Upload Bulk Vehicle</span></a><a class="btn c"><svg class="fa" width="12.00" height="12" viewBox="0 -1536 1792 1792" style="margin-right:3px" fill="currentColor"><path transform="scale(1,-1)" d="M1664 576C1493 312 1217 128 896 128C575 128 299 312 128 576C223 723 353 849 509 929C469 861 448 783 448 704C448 457 649 256 896 256C1143 256 1344 457 1344 704C1344 783 1323 861 1283 929C1439 849 1569 723 1664 576ZM944 960C944 934 922 912 896 912C782 912 688 818 688 704C688 678 666 656 640 656C614 656 592 678 592 704C592 871 729 1008 896 1008C922 1008 944 986 944 960ZM1792 576C1792 601 1784 624 1772 645C1588 947 1251 1152 896 1152C541 1152 204 947 20 645C8 624 0 601 0 576C0 551 8 528 20 507C204 205 541 0 896 0C1251 0 1588 204 1772 507C1784 528 1792 551 1792 576Z"/></svg><span style="font-size:10.86px">Customer View</span></a><a class="btn a"><span style="font-size:11.24px">Active</span></a><a class="btn i"><span style="font-size:11.32px">In Active</span></a></td></tr>
<tr class="even"><td><span style="font-size:12.75px">17</span></td><td><span style="font-size:12.71px">Africa Snacks Lushi</span></td><td></td><td></td><td></td><td class="act"><a class="btn u"><svg class="fa" width="8.57" height="12" viewBox="0 -1536 1280 1792" style="margin-right:3px" fill="currentColor"><path transform="scale(1,-1)" d="M1280 137C1280 400 1215 704 953 704C872 625 762 576 640 576C518 576 408 625 327 704C65 704 0 400 0 137C0 -9 96 -128 213 -128H1067C1184 -128 1280 -9 1280 137ZM1024 1024C1024 1236 852 1408 640 1408C428 1408 256 1236 256 1024C256 812 428 640 640 640C852 640 1024 812 1024 1024Z"/></svg><span style="font-size:10.75px;letter-spacing:-0.17px">Users</span></a><a class="btn e"><svg class="fa" width="12.00" height="12" viewBox="0 -1536 1792 1792" style="margin-right:3px" fill="currentColor"><path transform="scale(1,-1)" d="M888 352H832V448H736V504L852 620L1004 468ZM1328 1072C1337 1063 1336 1048 1327 1039L977 689C968 680 953 679 944 688C935 697 936 712 945 721L1295 1071C1304 1080 1319 1081 1328 1072ZM1408 478C1408 491 1400 502 1388 507C1376 512 1363 510 1353 500L1289 436C1283 430 1280 422 1280 414V288C1280 200 1208 128 1120 128H288C200 128 128 200 128 288V1120C128 1208 200 1280 288 1280H1120C1135 1280 1150 1278 1165 1274C1176 1270 1188 1273 1197 1282L1246 1331C1254 1339 1257 1349 1255 1360C1253 1370 1246 1379 1237 1383C1200 1400 1160 1408 1120 1408H288C129 1408 0 1279 0 1120V288C0 129 129 0 288 0H1120C1279 0 1408 129 1408 288ZM1312 1216 640 544V256H928L1600 928ZM1756 1084C1793 1121 1793 1183 1756 1220L1604 1372C1567 1409 1505 1409 1468 1372L1376 1280L1664 992L1756 1084Z"/></svg><span style="font-size:11.37px">Edit</span></a><a class="btn v"><svg class="fa" width="9.43" height="12" viewBox="0 -1536 1408 1792" style="margin-right:3px" fill="currentColor"><path transform="scale(1,-1)" d="M1408 800C1408 853 1365 896 1312 896H896V1312C896 1365 853 1408 800 1408H608C555 1408 512 1365 512 1312V896H96C43 896 0 853 0 800V608C0 555 43 512 96 512H512V96C512 43 555 0 608 0H800C853 0 896 43 896 96V512H1312C1365 512 1408 555 1408 608Z"/></svg><span style="font-size:11.32px">Upload Bulk Vehicle</span></a><a class="btn c"><svg class="fa" width="12.00" height="12" viewBox="0 -1536 1792 1792" style="margin-right:3px" fill="currentColor"><path transform="scale(1,-1)" d="M1664 576C1493 312 1217 128 896 128C575 128 299 312 128 576C223 723 353 849 509 929C469 861 448 783 448 704C448 457 649 256 896 256C1143 256 1344 457 1344 704C1344 783 1323 861 1283 929C1439 849 1569 723 1664 576ZM944 960C944 934 922 912 896 912C782 912 688 818 688 704C688 678 666 656 640 656C614 656 592 678 592 704C592 871 729 1008 896 1008C922 1008 944 986 944 960ZM1792 576C1792 601 1784 624 1772 645C1588 947 1251 1152 896 1152C541 1152 204 947 20 645C8 624 0 601 0 576C0 551 8 528 20 507C204 205 541 0 896 0C1251 0 1588 204 1772 507C1784 528 1792 551 1792 576Z"/></svg><span style="font-size:10.86px">Customer View</span></a><a class="btn a"><span style="font-size:11.24px">Active</span></a><a class="btn i"><span style="font-size:11.32px">In Active</span></a></td></tr>
<tr class="odd"><td><span style="font-size:12.62px">18</span></td><td><span style="font-size:11.90px;letter-spacing:-0.13px">AMT CONGO ANIL</span></td><td></td><td></td><td></td><td class="act"><a class="btn u"><svg class="fa" width="8.57" height="12" viewBox="0 -1536 1280 1792" style="margin-right:3px" fill="currentColor"><path transform="scale(1,-1)" d="M1280 137C1280 400 1215 704 953 704C872 625 762 576 640 576C518 576 408 625 327 704C65 704 0 400 0 137C0 -9 96 -128 213 -128H1067C1184 -128 1280 -9 1280 137ZM1024 1024C1024 1236 852 1408 640 1408C428 1408 256 1236 256 1024C256 812 428 640 640 640C852 640 1024 812 1024 1024Z"/></svg><span style="font-size:10.75px;letter-spacing:-0.17px">Users</span></a><a class="btn e"><svg class="fa" width="12.00" height="12" viewBox="0 -1536 1792 1792" style="margin-right:3px" fill="currentColor"><path transform="scale(1,-1)" d="M888 352H832V448H736V504L852 620L1004 468ZM1328 1072C1337 1063 1336 1048 1327 1039L977 689C968 680 953 679 944 688C935 697 936 712 945 721L1295 1071C1304 1080 1319 1081 1328 1072ZM1408 478C1408 491 1400 502 1388 507C1376 512 1363 510 1353 500L1289 436C1283 430 1280 422 1280 414V288C1280 200 1208 128 1120 128H288C200 128 128 200 128 288V1120C128 1208 200 1280 288 1280H1120C1135 1280 1150 1278 1165 1274C1176 1270 1188 1273 1197 1282L1246 1331C1254 1339 1257 1349 1255 1360C1253 1370 1246 1379 1237 1383C1200 1400 1160 1408 1120 1408H288C129 1408 0 1279 0 1120V288C0 129 129 0 288 0H1120C1279 0 1408 129 1408 288ZM1312 1216 640 544V256H928L1600 928ZM1756 1084C1793 1121 1793 1183 1756 1220L1604 1372C1567 1409 1505 1409 1468 1372L1376 1280L1664 992L1756 1084Z"/></svg><span style="font-size:11.37px">Edit</span></a><a class="btn v"><svg class="fa" width="9.43" height="12" viewBox="0 -1536 1408 1792" style="margin-right:3px" fill="currentColor"><path transform="scale(1,-1)" d="M1408 800C1408 853 1365 896 1312 896H896V1312C896 1365 853 1408 800 1408H608C555 1408 512 1365 512 1312V896H96C43 896 0 853 0 800V608C0 555 43 512 96 512H512V96C512 43 555 0 608 0H800C853 0 896 43 896 96V512H1312C1365 512 1408 555 1408 608Z"/></svg><span style="font-size:11.32px">Upload Bulk Vehicle</span></a><a class="btn c"><svg class="fa" width="12.00" height="12" viewBox="0 -1536 1792 1792" style="margin-right:3px" fill="currentColor"><path transform="scale(1,-1)" d="M1664 576C1493 312 1217 128 896 128C575 128 299 312 128 576C223 723 353 849 509 929C469 861 448 783 448 704C448 457 649 256 896 256C1143 256 1344 457 1344 704C1344 783 1323 861 1283 929C1439 849 1569 723 1664 576ZM944 960C944 934 922 912 896 912C782 912 688 818 688 704C688 678 666 656 640 656C614 656 592 678 592 704C592 871 729 1008 896 1008C922 1008 944 986 944 960ZM1792 576C1792 601 1784 624 1772 645C1588 947 1251 1152 896 1152C541 1152 204 947 20 645C8 624 0 601 0 576C0 551 8 528 20 507C204 205 541 0 896 0C1251 0 1588 204 1772 507C1784 528 1792 551 1792 576Z"/></svg><span style="font-size:10.86px">Customer View</span></a><a class="btn a"><span style="font-size:11.24px">Active</span></a><a class="btn i"><span style="font-size:11.32px">In Active</span></a></td></tr>
<tr class="even"><td><span style="font-size:12.75px">19</span></td><td><span style="font-size:12.86px">AONE constructions</span></td><td></td><td></td><td></td><td class="act"><a class="btn u"><svg class="fa" width="8.57" height="12" viewBox="0 -1536 1280 1792" style="margin-right:3px" fill="currentColor"><path transform="scale(1,-1)" d="M1280 137C1280 400 1215 704 953 704C872 625 762 576 640 576C518 576 408 625 327 704C65 704 0 400 0 137C0 -9 96 -128 213 -128H1067C1184 -128 1280 -9 1280 137ZM1024 1024C1024 1236 852 1408 640 1408C428 1408 256 1236 256 1024C256 812 428 640 640 640C852 640 1024 812 1024 1024Z"/></svg><span style="font-size:10.75px;letter-spacing:-0.17px">Users</span></a><a class="btn e"><svg class="fa" width="12.00" height="12" viewBox="0 -1536 1792 1792" style="margin-right:3px" fill="currentColor"><path transform="scale(1,-1)" d="M888 352H832V448H736V504L852 620L1004 468ZM1328 1072C1337 1063 1336 1048 1327 1039L977 689C968 680 953 679 944 688C935 697 936 712 945 721L1295 1071C1304 1080 1319 1081 1328 1072ZM1408 478C1408 491 1400 502 1388 507C1376 512 1363 510 1353 500L1289 436C1283 430 1280 422 1280 414V288C1280 200 1208 128 1120 128H288C200 128 128 200 128 288V1120C128 1208 200 1280 288 1280H1120C1135 1280 1150 1278 1165 1274C1176 1270 1188 1273 1197 1282L1246 1331C1254 1339 1257 1349 1255 1360C1253 1370 1246 1379 1237 1383C1200 1400 1160 1408 1120 1408H288C129 1408 0 1279 0 1120V288C0 129 129 0 288 0H1120C1279 0 1408 129 1408 288ZM1312 1216 640 544V256H928L1600 928ZM1756 1084C1793 1121 1793 1183 1756 1220L1604 1372C1567 1409 1505 1409 1468 1372L1376 1280L1664 992L1756 1084Z"/></svg><span style="font-size:11.37px">Edit</span></a><a class="btn v"><svg class="fa" width="9.43" height="12" viewBox="0 -1536 1408 1792" style="margin-right:3px" fill="currentColor"><path transform="scale(1,-1)" d="M1408 800C1408 853 1365 896 1312 896H896V1312C896 1365 853 1408 800 1408H608C555 1408 512 1365 512 1312V896H96C43 896 0 853 0 800V608C0 555 43 512 96 512H512V96C512 43 555 0 608 0H800C853 0 896 43 896 96V512H1312C1365 512 1408 555 1408 608Z"/></svg><span style="font-size:11.32px">Upload Bulk Vehicle</span></a><a class="btn c"><svg class="fa" width="12.00" height="12" viewBox="0 -1536 1792 1792" style="margin-right:3px" fill="currentColor"><path transform="scale(1,-1)" d="M1664 576C1493 312 1217 128 896 128C575 128 299 312 128 576C223 723 353 849 509 929C469 861 448 783 448 704C448 457 649 256 896 256C1143 256 1344 457 1344 704C1344 783 1323 861 1283 929C1439 849 1569 723 1664 576ZM944 960C944 934 922 912 896 912C782 912 688 818 688 704C688 678 666 656 640 656C614 656 592 678 592 704C592 871 729 1008 896 1008C922 1008 944 986 944 960ZM1792 576C1792 601 1784 624 1772 645C1588 947 1251 1152 896 1152C541 1152 204 947 20 645C8 624 0 601 0 576C0 551 8 528 20 507C204 205 541 0 896 0C1251 0 1588 204 1772 507C1784 528 1792 551 1792 576Z"/></svg><span style="font-size:10.86px">Customer View</span></a><a class="btn a"><span style="font-size:11.24px">Active</span></a><a class="btn i"><span style="font-size:11.32px">In Active</span></a></td></tr>
<tr class="odd"><td><span style="font-size:12.38px">20</span></td><td><span style="font-size:13.00px;letter-spacing:0.15px">Bralima</span></td><td></td><td></td><td></td><td class="act"><a class="btn u"><svg class="fa" width="8.57" height="12" viewBox="0 -1536 1280 1792" style="margin-right:3px" fill="currentColor"><path transform="scale(1,-1)" d="M1280 137C1280 400 1215 704 953 704C872 625 762 576 640 576C518 576 408 625 327 704C65 704 0 400 0 137C0 -9 96 -128 213 -128H1067C1184 -128 1280 -9 1280 137ZM1024 1024C1024 1236 852 1408 640 1408C428 1408 256 1236 256 1024C256 812 428 640 640 640C852 640 1024 812 1024 1024Z"/></svg><span style="font-size:10.75px;letter-spacing:-0.17px">Users</span></a><a class="btn e"><svg class="fa" width="12.00" height="12" viewBox="0 -1536 1792 1792" style="margin-right:3px" fill="currentColor"><path transform="scale(1,-1)" d="M888 352H832V448H736V504L852 620L1004 468ZM1328 1072C1337 1063 1336 1048 1327 1039L977 689C968 680 953 679 944 688C935 697 936 712 945 721L1295 1071C1304 1080 1319 1081 1328 1072ZM1408 478C1408 491 1400 502 1388 507C1376 512 1363 510 1353 500L1289 436C1283 430 1280 422 1280 414V288C1280 200 1208 128 1120 128H288C200 128 128 200 128 288V1120C128 1208 200 1280 288 1280H1120C1135 1280 1150 1278 1165 1274C1176 1270 1188 1273 1197 1282L1246 1331C1254 1339 1257 1349 1255 1360C1253 1370 1246 1379 1237 1383C1200 1400 1160 1408 1120 1408H288C129 1408 0 1279 0 1120V288C0 129 129 0 288 0H1120C1279 0 1408 129 1408 288ZM1312 1216 640 544V256H928L1600 928ZM1756 1084C1793 1121 1793 1183 1756 1220L1604 1372C1567 1409 1505 1409 1468 1372L1376 1280L1664 992L1756 1084Z"/></svg><span style="font-size:11.37px">Edit</span></a><a class="btn v"><svg class="fa" width="9.43" height="12" viewBox="0 -1536 1408 1792" style="margin-right:3px" fill="currentColor"><path transform="scale(1,-1)" d="M1408 800C1408 853 1365 896 1312 896H896V1312C896 1365 853 1408 800 1408H608C555 1408 512 1365 512 1312V896H96C43 896 0 853 0 800V608C0 555 43 512 96 512H512V96C512 43 555 0 608 0H800C853 0 896 43 896 96V512H1312C1365 512 1408 555 1408 608Z"/></svg><span style="font-size:11.32px">Upload Bulk Vehicle</span></a><a class="btn c"><svg class="fa" width="12.00" height="12" viewBox="0 -1536 1792 1792" style="margin-right:3px" fill="currentColor"><path transform="scale(1,-1)" d="M1664 576C1493 312 1217 128 896 128C575 128 299 312 128 576C223 723 353 849 509 929C469 861 448 783 448 704C448 457 649 256 896 256C1143 256 1344 457 1344 704C1344 783 1323 861 1283 929C1439 849 1569 723 1664 576ZM944 960C944 934 922 912 896 912C782 912 688 818 688 704C688 678 666 656 640 656C614 656 592 678 592 704C592 871 729 1008 896 1008C922 1008 944 986 944 960ZM1792 576C1792 601 1784 624 1772 645C1588 947 1251 1152 896 1152C541 1152 204 947 20 645C8 624 0 601 0 576C0 551 8 528 20 507C204 205 541 0 896 0C1251 0 1588 204 1772 507C1784 528 1792 551 1792 576Z"/></svg><span style="font-size:10.86px">Customer View</span></a><a class="btn a"><span style="font-size:11.24px">Active</span></a><a class="btn i"><span style="font-size:11.32px">In Active</span></a></td></tr>
</table>
</body>
</html>
